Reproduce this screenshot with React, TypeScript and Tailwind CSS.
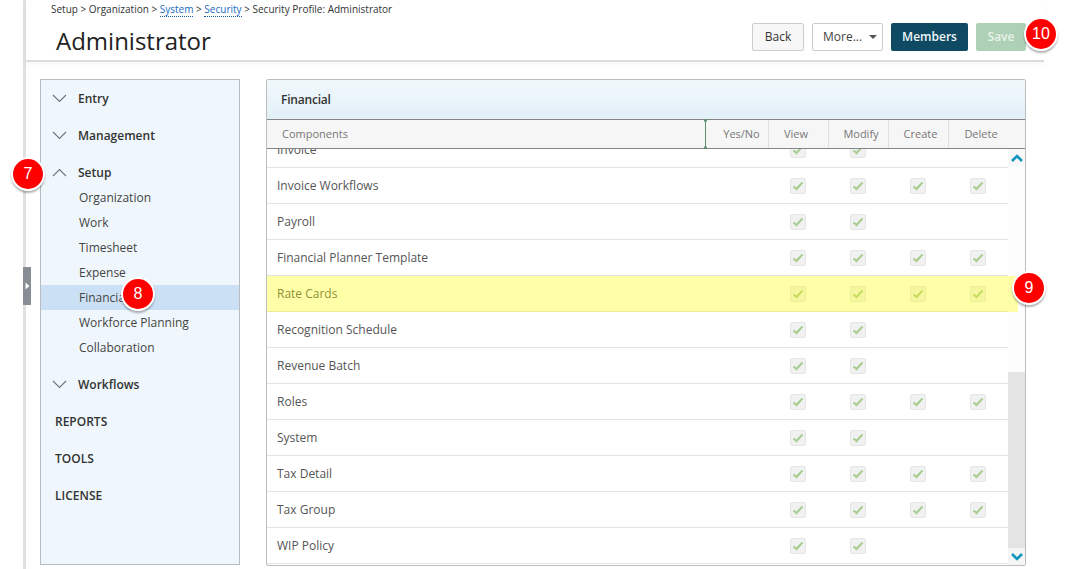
import React from "react";

const font = { fontFamily: '"Open Sans", "Noto Sans", sans-serif' };

function Chevron({ up = false }: { up?: boolean }) {
  return (
    <svg width="15" height="9" viewBox="0 0 15 9" fill="none" className="mr-[11px] ml-[11px] shrink-0">
      <path d={up ? "M1 8 L7.5 1.5 L14 8" : "M1 1 L7.5 7.5 L14 1"} stroke="#6f7478" strokeWidth="1.1" />
    </svg>
  );
}

function Top({ label, up = false }: { label: string; up?: boolean }) {
  return (
    <div className="flex h-[37px] items-center text-[12px] font-semibold text-[#333]">
      <Chevron up={up} />
      <span>{label}</span>
    </div>
  );
}

function Sub({ label, active = false }: { label: string; active?: boolean }) {
  return (
    <div className={`flex h-[25px] items-center pl-[38px] text-[12px] text-[#444] ${active ? "bg-[#cbe0f5]" : ""}`}>
      {label}
    </div>
  );
}

function Plain({ label }: { label: string }) {
  return <div className="flex h-[37px] items-center pl-[14px] text-[12px] font-semibold text-[#333]">{label}</div>;
}

function Check() {
  return (
    <div className="flex h-[16px] w-[16px] items-center justify-center rounded-[2px] border border-[#e6e6e6] bg-[#f1f1f1]">
      <svg width="12" height="10" viewBox="0 0 12 10" fill="none">
        <path d="M1.5 5.5 L4.5 8 L10.5 1.5" stroke="#a8cb8e" strokeWidth="2" />
      </svg>
    </div>
  );
}

const rows: [string, number][] = [
  ["Invoice", 2],
  ["Invoice Workflows", 4],
  ["Payroll", 2],
  ["Financial Planner Template", 4],
  ["Rate Cards", 4],
  ["Recognition Schedule", 2],
  ["Revenue Batch", 2],
  ["Roles", 4],
  ["System", 2],
  ["Tax Detail", 4],
  ["Tax Group", 4],
  ["WIP Policy", 2],
];

function Row({ name, count, first }: { name: string; count: number; first: boolean }) {
  const cells = [0, 1, 2, 3];
  return (
    <div className={`flex h-[36px] shrink-0 items-center border-b border-[#e2e2e2] ${first ? "-mt-[17px]" : ""}`}>
      <div className="w-[501px] pl-[10px] text-[12px] text-[#555]">{name}</div>
      {cells.map((i) => (
        <div key={i} className="flex w-[60px] justify-center">
          {i < count ? <Check /> : null}
        </div>
      ))}
    </div>
  );
}

function Badge({ n, className }: { n: string; className: string }) {
  return (
    <div
      className={`absolute flex h-[34px] w-[34px] items-center justify-center rounded-full border-[2px] border-white bg-[#fe0000] text-[16px] text-white shadow-[0_2px_2px_rgba(0,0,0,0.3)] ${className}`}
      style={{ fontFamily: '"Liberation Sans", Arial, sans-serif' }}
    >
      {n}
    </div>
  );
}

function HeaderCell({ label, className = "" }: { label: string; className?: string }) {
  return (
    <div className={`flex h-full w-[60px] items-center justify-center border-r border-[#dedede] ${className}`}>
      {label}
    </div>
  );
}

export default function App() {
  return (
    <div className="relative flex h-[569px] w-[1071px] overflow-hidden bg-white" style={font}>
      <div className="ml-[23px] w-[3px] shrink-0 bg-[#e0e0e0]" />

      <div className="absolute left-[23px] top-[267px] flex h-[38px] w-[8px] items-center justify-center bg-[#868d94]">
        <svg width="5" height="8" viewBox="0 0 5 8">
          <path d="M0.5 0.5 L4.5 4 L0.5 7.5 Z" fill="#fff" />
        </svg>
      </div>

      <div className="flex min-w-0 flex-1 flex-col">
        <header className="flex h-[62px] w-[1018px] shrink-0 justify-between border-b-2 border-[#dcdcdc] shadow-[0_3px_6px_rgba(0,0,0,0.03)]">
          <div className="pl-[25px]">
            <div className="flex h-[19px] items-center text-[10px] text-[#333]">
              <span>Setup &gt; Organization &gt;&nbsp;</span>
              <span className="border-b border-dotted border-[#1a5fb4] leading-[13px] text-[#1a6bc0]">System</span>
              <span>&nbsp;&gt;&nbsp;</span>
              <span className="border-b border-dotted border-[#1a5fb4] leading-[13px] text-[#1a6bc0]">Security</span>
              <span>&nbsp;&gt; Security Profile: Administrator</span>
            </div>
            <h1 className="mt-[4px] pl-[5px] text-[24px] leading-[36px] text-[#222]">Administrator</h1>
          </div>
          <div className="flex gap-2 pr-[18px] pt-[23px]">
            <button className="flex h-[28px] w-[52px] items-center justify-center rounded-[2px] border border-[#ccc] bg-[#f7f7f7] text-[12px] text-[#333]">
              Back
            </button>
            <button className="flex h-[28px] w-[71px] items-center justify-between rounded-[2px] border border-[#ccc] bg-white pl-[10px] pr-[5px] text-[12px] text-[#444]">
              <span>More...</span>
              <svg width="8" height="4" viewBox="0 0 8 4">
                <path d="M0 0 H8 L4 4 Z" fill="#555" />
              </svg>
            </button>
            <button className="flex h-[28px] w-[77px] items-center justify-center rounded-[2px] bg-[#0f4a63] text-[12px] font-semibold text-[#eef5f8]">
              Members
            </button>
            <button className="flex h-[28px] w-[50px] items-center justify-center rounded-[2px] bg-[#aed0b5] text-[12px] font-semibold text-[#e9f3ea]">
              Save
            </button>
          </div>
        </header>

        <div className="flex gap-[26px] pl-[14px] pt-[17px]">
          <aside className="h-[486px] w-[200px] shrink-0 border border-[#b6bcc0] bg-[#eff7fc]">
            <Top label="Entry" />
            <Top label="Management" />
            <Top label="Setup" up />
            <div className="-mt-[6px] mb-[6px]">
              <Sub label="Organization" />
              <Sub label="Work" />
              <Sub label="Timesheet" />
              <Sub label="Expense" />
              <Sub label="Financial" active />
              <Sub label="Workforce Planning" />
              <Sub label="Collaboration" />
            </div>
            <Top label="Workflows" />
            <Plain label="REPORTS" />
            <Plain label="TOOLS" />
            <Plain label="LICENSE" />
          </aside>

          <section className="relative flex h-[487px] w-[760px] shrink-0 flex-col rounded-[2px] border border-[#bcbcbc] bg-white">
            <div className="flex h-[39px] shrink-0 items-center bg-gradient-to-b from-[#f1f8fc] to-[#e3f0f8] pl-[14px] text-[12px] font-semibold tracking-[-0.2px] text-[#333]">
              Financial
            </div>
            <div className="flex h-[30px] shrink-0 items-center border-y border-[#858585] bg-[#f6f6f6] text-[11px] text-[#777]">
              <div className="w-[438px] pl-[15px]">Components</div>
              <div className="relative h-full w-px bg-[#5d8f6d]">
                <div className="absolute -left-[1px] -top-[1px] h-[3px] w-[3px] rounded-full bg-[#5d8f6d]" />
                <div className="absolute -bottom-[1px] -left-[1px] h-[3px] w-[3px] rounded-full bg-[#5d8f6d]" />
              </div>
              <HeaderCell label="Yes/No" className="w-[63px]! pl-[9px]" />
              <HeaderCell label="View" className="pr-[5px]" />
              <HeaderCell label="Modify" className="pl-[5px]" />
              <HeaderCell label="Create" className="pl-[4px]" />
              <div className="flex h-full w-[60px] items-center justify-center pl-[4px]">Delete</div>
            </div>
            <div className="flex min-h-0 flex-1">
              <div className="min-h-0 w-[741px] overflow-hidden">
                {rows.map(([name, count], i) => (
                  <Row key={name} name={name} count={count} first={i === 0} />
                ))}
              </div>
              <div className="flex w-[17px] flex-col bg-[#fdfdfd]">
                <div className="flex h-[17px] items-center justify-center bg-[#f8f8f8]">
                  <svg width="12" height="8" viewBox="0 0 12 8" fill="none">
                    <path d="M1 7 L6 2 L11 7" stroke="#1195bd" strokeWidth="2.6" />
                  </svg>
                </div>
                <div className="h-[206px]" />
                <div className="flex-1 bg-[#e4e4e4]" />
                <div className="flex h-[17px] items-center justify-center bg-[#f5f5f5]">
                  <svg width="12" height="8" viewBox="0 0 12 8" fill="none">
                    <path d="M1 1 L6 6 L11 1" stroke="#1195bd" strokeWidth="2.6" />
                  </svg>
                </div>
              </div>
            </div>
            <div className="absolute left-0 top-[196px] h-[36px] w-[751px] bg-[#ffff00]/[0.34]" />
          </section>
        </div>
      </div>

      <Badge n="7" className="left-[11px] top-[157px]" />
      <Badge n="8" className="left-[121px] top-[277px]" />
      <Badge n="9" className="left-[1012px] top-[271px]" />
      <Badge n="10" className="left-[1024px] top-[17px]" />
    </div>
  );
}
